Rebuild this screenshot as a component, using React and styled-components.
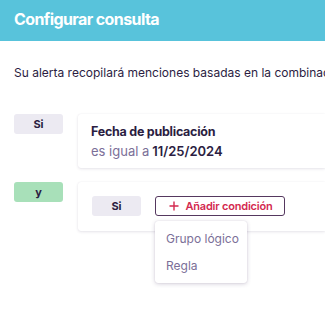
import React from 'react';
import styled, { createGlobalStyle } from 'styled-components';

const GlobalStyle = createGlobalStyle`
  body {
    margin: 0;
    padding: 0;
    background: #ffffff;
    font-family: Inter, 'Noto Sans', sans-serif;
  }
  #root {
    min-height: 320px;
  }
`;

const Page = styled.div`
  width: 325px;
  height: 320px;
  overflow: hidden;
`;

const Header = styled.div`
  height: 41px;
  background-color: #58c3db;
  padding: 0 14px 4px 14px;
  box-sizing: border-box;
  display: flex;
  align-items: center;
  h1 {
    margin: 0;
    color: #ffffff;
    font-size: 16px;
    font-weight: 700;
    letter-spacing: -0.6px;
    white-space: nowrap;
  }
`;

const Body = styled.div`
  padding: 24px 0 0 14px;
`;

const Intro = styled.p`
  margin: 0 0 33px 0;
  font-size: 12px;
  color: #2b1d42;
  white-space: nowrap;
  line-height: 16px;
`;

const Row = styled.div`
  display: grid;
  grid-template-columns: 49px 1fr;
  column-gap: 15px;
  align-items: start;
  margin-bottom: 14px;
`;

const Tag = styled.div`
  width: 49px;
  height: 20px;
  border-radius: 3px;
  background-color: ${p => (p.$green ? '#a8e0b9' : '#eceaf2')};
  color: #2b1d42;
  font-size: 11px;
  font-weight: 700;
  display: flex;
  align-items: center;
  justify-content: center;
`;

const Card = styled.div`
  background: #ffffff;
  border-radius: 3px 0 0 3px;
  box-shadow: 0 1px 3px rgba(60, 40, 90, 0.12), 0 0 1px rgba(60, 40, 90, 0.1);
  padding: ${p => p.$pad || '9px 13px 7px 13px'};
  position: relative;
`;

const Title = styled.div`
  font-size: 12.5px;
  font-weight: 700;
  color: #2b1d42;
  line-height: 18px;
  letter-spacing: -0.25px;
`;

const Detail = styled.div`
  font-size: 13px;
  color: #7b6f98;
  line-height: 20px;
  b {
    color: #2b1d42;
    font-weight: 600;
    margin-left: 3px;
  }
`;

const Controls = styled.div`
  display: flex;
  gap: 14px;
  align-items: center;
`;

const AddWrap = styled.div`
  position: relative;
`;

const AddButton = styled.button`
  height: 20px;
  width: 130px;
  padding: 0 0 0 2px;
  border: 1px solid #55385f;
  border-radius: 3px;
  background: #ffffff;
  color: #d3294f;
  font-family: Inter, 'Noto Sans', sans-serif;
  font-size: 11px;
  font-weight: 600;
  letter-spacing: -0.2px;
  display: flex;
  align-items: center;
  justify-content: center;
  gap: 6px;
  svg {
    display: block;
  }
`;

const Menu = styled.div`
  position: absolute;
  top: 25px;
  left: 0;
  width: 92px;
  padding: 4px 0;
  background: #ffffff;
  border-radius: 3px;
  box-shadow: 0 1px 4px rgba(60, 40, 90, 0.22), 0 0 1px rgba(60, 40, 90, 0.2);
  z-index: 2;
`;

const MenuItem = styled.div`
  padding: 0 11px;
  font-size: 12px;
  color: #7b6f98;
  line-height: 27px;
  white-space: nowrap;
`;

const App = () => (
  <Page>
    <GlobalStyle />
    <Header>
      <h1>Configurar consulta</h1>
    </Header>
    <Body>
      <Intro>Su alerta recopilará menciones basadas en la combinación de condiciones</Intro>
      <Row>
        <Tag>Si</Tag>
        <Card>
          <Title>Fecha de publicación</Title>
          <Detail>es igual a<b>11/25/2024</b></Detail>
        </Card>
      </Row>
      <Row>
        <Tag $green>y</Tag>
        <Card $pad="14px 14px 15px 14px">
          <Controls>
            <Tag>Si</Tag>
            <AddWrap>
              <AddButton>
                <svg width="10" height="10" viewBox="0 0 10 10">
                  <path d="M5 0.5v9M0.5 5h9" stroke="#d3294f" strokeWidth="1.4" />
                </svg>
                Añadir condición
              </AddButton>
              <Menu>
                <MenuItem>Grupo lógico</MenuItem>
                <MenuItem>Regla</MenuItem>
              </Menu>
            </AddWrap>
          </Controls>
        </Card>
      </Row>
    </Body>
  </Page>
);

export default App;
